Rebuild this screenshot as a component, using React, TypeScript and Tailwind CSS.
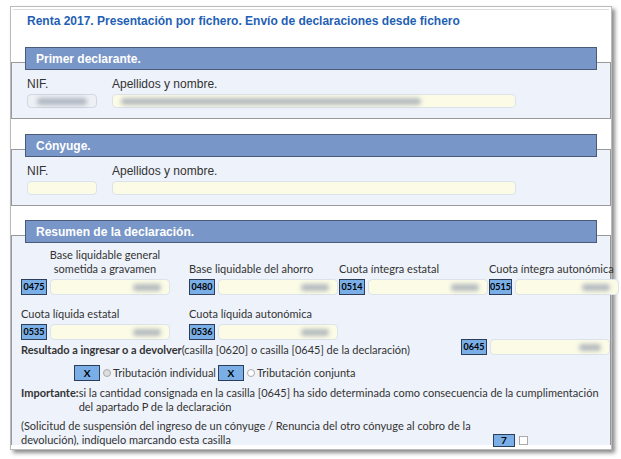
const arial = { fontFamily: '"Liberation Sans", Arial, sans-serif' };
const lato = { fontFamily: 'Lato, "Noto Sans", sans-serif' };

function Blur({ w }: { w: number }) {
  return <span className="inline-block h-[7px] rounded-full bg-gray-400/70 blur-[2px]" style={{ width: w }} />;
}

function Code({ c }: { c: string }) {
  return (
    <span className="inline-flex h-[16px] w-[26px] items-center justify-center border border-[#2c3e5a] bg-[#79aee6] text-[9px] font-bold text-black" style={lato}>
      {c}
    </span>
  );
}

function Field({ w = 120, blur = 30 }: { w?: number; blur?: number }) {
  return (
    <span className="ml-[3px] inline-flex h-[16px] items-center justify-end rounded-sm border border-[#dde3ea] bg-[#fbfbe6] pr-2" style={{ width: w }}>
      {blur > 0 && <Blur w={blur} />}
    </span>
  );
}

function Header({ t }: { t: string }) {
  return (
    <div className="relative z-10 mx-[14px] flex h-[23px] items-center border border-[#4a5a78] bg-[#7996c8] px-[10px] text-[12px] font-bold text-white" style={arial}>
      {t}
    </div>
  );
}

function Cell({ label, code, center }: { label: React.ReactNode; code: string; center?: boolean }) {
  return (
    <div className="flex flex-col">
      <div className={`text-[11px] leading-[14px] text-[#333] ${center ? 'text-center' : ''}`}>{label}</div>
      <div className="mt-[3px] flex items-center">
        <Code c={code} />
        <Field w={120} blur={28} />
      </div>
    </div>
  );
}

export default function App() {
  return (
    <div className="h-[459px] w-[621px] bg-white pl-[10px] pt-[6px]">
      <div className="h-[444px] w-[602px] border border-[#bbb] bg-white shadow-[3px_3px_4px_rgba(0,0,0,0.45)]">
        <div className="mx-[2px] mt-[2px] border-t border-[#ddd] pl-[14px] pt-[2px] text-[12px] font-bold text-[#1f5fb4]" style={arial}>
          Renta 2017. Presentación por fichero. Envío de declaraciones desde fichero
        </div>

        <div className="mt-[17px]">
          <Header t="Primer declarante." />
          <div className="-mt-[8px] h-[57px] border border-[#999] bg-[#eef2fa] pl-[15px] pt-[12px] text-[12px] text-[#333]" style={arial}>
            <div className="flex">
              <div className="w-[85px]">NIF.</div>
              <div>Apellidos y nombre.</div>
            </div>
            <div className="mt-[1px] flex">
              <span className="flex h-[14px] w-[70px] items-center justify-center rounded-sm border border-[#cfd8e3] bg-[#edf0f4]"><Blur w={50} /></span>
              <span className="ml-[15px] flex h-[14px] w-[404px] items-center rounded-sm border border-[#dde3ea] bg-[#fbfbe6] pl-2"><Blur w={300} /></span>
            </div>
          </div>
        </div>

        <div className="mt-[15px]">
          <Header t="Cónyuge." />
          <div className="-mt-[8px] h-[57px] border border-[#999] bg-[#eef2fa] pl-[15px] pt-[12px] text-[12px] text-[#333]" style={arial}>
            <div className="flex">
              <div className="w-[85px]">NIF.</div>
              <div>Apellidos y nombre.</div>
            </div>
            <div className="mt-[1px] flex">
              <span className="h-[14px] w-[70px] rounded-sm border border-[#dde3ea] bg-[#fbfbe6]" />
              <span className="ml-[15px] h-[14px] w-[404px] rounded-sm border border-[#dde3ea] bg-[#fbfbe6]" />
            </div>
          </div>
        </div>

        <div className="mt-[14px]">
          <Header t="Resumen de la declaración." />
          <div className="-mt-[8px] h-[210px] border border-[#999] border-b-0 bg-[#eef2fa] pl-[9px] pt-[12px] text-[11px] text-[#333]" style={lato}>
            <div className="grid grid-cols-[168px_150px_150px_130px] items-end">
              <Cell center label={<>Base liquidable general<br />sometida a gravamen</>} code="0475" />
              <Cell label="Base liquidable del ahorro" code="0480" />
              <Cell label="Cuota íntegra estatal" code="0514" />
              <Cell label="Cuota íntegra autonómica" code="0515" />
            </div>
            <div className="mt-[12px] grid grid-cols-[168px_150px]">
              <Cell label="Cuota líquida estatal" code="0535" />
              <Cell label="Cuota líquida autonómica" code="0536" />
            </div>
            <div className="mt-[3px] flex items-end">
              <div className="w-[470px] leading-[14px]"><b>Resultado a ingresar o a devolver</b>(casilla [0620] o casilla [0645] de la declaración)</div>
              <div className="-mt-[6px] flex items-center pb-[2px]"><Code c="0645" /><Field w={120} blur={22} /></div>
            </div>
            <div className="mt-[8px] flex items-center pl-[53px]">
              <span className="flex h-[16px] w-[26px] items-center justify-center border border-[#2c3e5a] bg-[#79aee6] text-[10px] font-bold text-black">X</span>
              <span className="ml-[3px] inline-block h-[8px] w-[8px] rounded-full border border-[#aaa] bg-[#ddd]" />
              <span className="ml-[2px]">Tributación individual</span>
              <span className="ml-[2px] flex h-[16px] w-[26px] items-center justify-center border border-[#2c3e5a] bg-[#79aee6] text-[10px] font-bold text-black">X</span>
              <span className="ml-[3px] inline-block h-[8px] w-[8px] rounded-full border border-[#aaa] bg-white" />
              <span className="ml-[2px]">Tributación conjunta</span>
            </div>
            <div className="mt-[4px] flex pr-[10px] leading-[14px]">
              <b>Importante:</b>
              <span>si la cantidad consignada en la casilla [0645] ha sido determinada como consecuencia de la cumplimentación del apartado P de la declaración</span>
            </div>
            <div className="mt-[5px] flex items-end leading-[14px]">
              <div className="w-[470px]">(Solicitud de suspensión del ingreso de un cónyuge / Renuncia del otro cónyuge al cobro de la devolución), indíquelo marcando esta casilla</div>
              <span className="ml-[2px] flex h-[13px] w-[22px] items-center justify-center border border-[#2c3e5a] bg-[#79aee6] text-[10px] font-bold text-black">7</span>
              <span className="mb-[2px] ml-[4px] inline-block h-[9px] w-[9px] border border-[#aaa] bg-white" />
            </div>
          </div>
        </div>
      </div>
    </div>
  );
}
